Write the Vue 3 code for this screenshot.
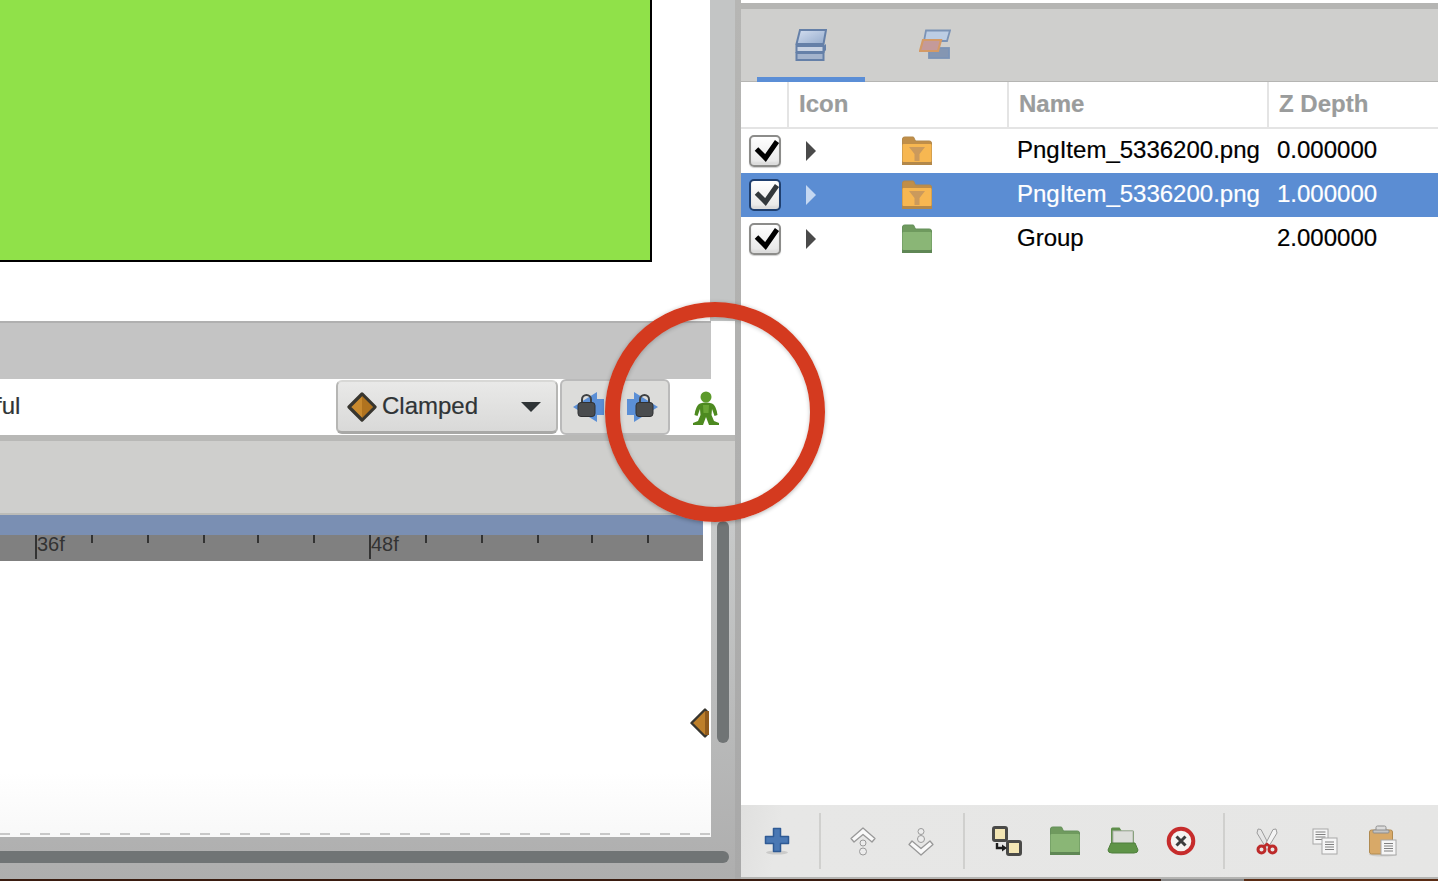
<script setup>
const rows = [
  { name: 'PngItem_5336200.png', depth: '0.000000', kind: 'filter', selected: false },
  { name: 'PngItem_5336200.png', depth: '1.000000', kind: 'filter', selected: true },
  { name: 'Group', depth: '2.000000', kind: 'group', selected: false },
]
const minorTicks = [91, 147, 203, 257, 313, 425, 481, 537, 591, 647]
const majorTicks = [
  { x: 35, label: '36f' },
  { x: 369, label: '48f' },
]
</script>

<template>
  <div class="app">
    <div class="main">
      <div class="left">
        <div class="canvas-row">
          <div class="canvas"><div class="green"></div></div>
          <div class="gutter-top"></div>
        </div>
        <div class="band-row">
          <div class="band"></div>
        </div>
        <div class="ctrl-row">
          <div class="ctrl-text">ful</div>
          <div class="clamped">
            <svg width="30" height="30" viewBox="0 0 30 30" class="soft">
              <polygon points="15,2 28,15 15,28 2,15" fill="#c98a2e" stroke="#38362f" stroke-width="3.200" stroke-linejoin="round" />
              <polygon points="15,4 26,15 15,26" fill="#b0731f" />
            </svg>
            <span class="clamped-label">Clamped</span>
            <svg width="20" height="10" viewBox="0 0 20 10" class="caret"><polygon points="0,0 20,0 10,10" fill="#2f3436" /></svg>
          </div>
          <div class="lock-group">
            <svg width="32" height="32" viewBox="0 0 32 32" class="soft">
              <polygon points="32,8 25,8 25,1 1,16 25,31 25,24 32,24" fill="#5b8fd6" />
              <path d="M10 12V8.500a4.500 4.500 0 0 1 9 0V12" fill="none" stroke="#3e4042" stroke-width="2" />
              <rect x="6" y="11.500" width="17" height="14" rx="3" fill="#4a4c4e" stroke="#2f3032" />
            </svg>
            <svg width="32" height="32" viewBox="0 0 32 32" class="soft">
              <polygon points="0,8 7,8 7,1 31,16 7,31 7,24 0,24" fill="#5b8fd6" />
              <path d="M13 12V8.500a4.500 4.500 0 0 1 9 0V12" fill="none" stroke="#3e4042" stroke-width="2" />
              <rect x="9" y="11.500" width="17" height="14" rx="3" fill="#4a4c4e" stroke="#2f3032" />
            </svg>
          </div>
          <div class="person">
            <svg width="28" height="34" viewBox="0 0 28 34" class="soft">
              <circle cx="14" cy="6" r="5.500" fill="#5c9a2a" />
              <path d="M8 12.500Q14 10.500 20 12.500Q24 14 25.500 24L22.500 25L20 18L19.500 24L22 30L27 32V34H17L14 26L11 34H1V32L6 30L8.500 24L8 18L5.500 25L2.500 24Q4 14 8 12.500Z" fill="#4d8a20" />
              <path d="M11 14H17L16.500 22H11.500Z" fill="#6aa636" />
            </svg>
          </div>
        </div>
        <div class="sep"></div>
        <div class="timeline-head"></div>
        <div class="lower">
          <div class="lower-main">
            <div class="tracks">
              <div class="blue-strip"></div>
              <div class="ruler">
                <i v-for="t in minorTicks" :key="t" class="tick" :style="{ left: t + 'px' }"></i>
                <template v-for="m in majorTicks" :key="m.x">
                  <i class="tick major" :style="{ left: m.x + 'px' }"></i>
                  <span class="tick-label" :style="{ left: m.x + 2 + 'px' }">{{ m.label }}</span>
                </template>
              </div>
              <svg class="keyframe" width="19" height="30" viewBox="0 0 19 30">
                <polygon points="15,1.500 28,15 15,28.500 1.500,15" fill="#bd7f2a" stroke="#37352f" stroke-width="2.400" stroke-linejoin="round" />
                <rect x="15" y="3" width="4" height="24" fill="#8f5a1c" />
              </svg>
              <div class="dashes"></div>
            </div>
            <div class="v-gutter"><div class="v-thumb"></div></div>
          </div>
          <div class="h-gutter"><div class="h-thumb"></div></div>
        </div>
      </div>

      <div class="divider"></div>

      <div class="right">
        <div class="top-white"></div>
        <div class="top-line"></div>
        <div class="tabs">
          <div class="tab active">
            <svg width="32" height="34" viewBox="0 0 32 34" class="soft">
              <defs>
                <linearGradient id="plate" x1="0" y1="0" x2="1" y2="1">
                  <stop offset="0" stop-color="#d4dff0" /><stop offset="1" stop-color="#94abcc" />
                </linearGradient>
              </defs>
              <rect x="1.500" y="25" width="27" height="7" fill="#a3b3cc" stroke="#6580a8" stroke-width="2" />
              <rect x="1.500" y="18" width="27" height="6" fill="#c8d2e2" stroke="#6580a8" stroke-width="2" />
              <polygon points="28.500,25 31,22 31,16 28.500,18" fill="#6580a8" />
              <polygon points="5,2 31,2 28.500,16 1.500,16" fill="url(#plate)" stroke="#6580a8" stroke-width="2" />
            </svg>
          </div>
          <div class="tab">
            <svg width="32" height="32" viewBox="0 0 32 32" class="soft">
              <polygon points="7,1.500 31,1.500 28,12 5,12" fill="#bccde4" stroke="#7b93b6" stroke-width="1.800" />
              <rect x="10" y="19" width="20" height="10" fill="#8496b2" stroke="#7b93b6" stroke-width="1.800" />
              <polygon points="4,11 22,11 19,22 1,22" fill="#c49a9a" stroke="#d49a66" stroke-width="2.200" />
            </svg>
          </div>
        </div>

        <div class="table">
          <div class="thead">
            <div class="th first"></div>
            <div class="th">Icon</div>
            <div class="th">Name</div>
            <div class="th">Z Depth</div>
          </div>
          <div v-for="(r, i) in rows" :key="i" class="tr" :class="{ selected: r.selected }">
            <div class="td check-cell">
              <span class="checkbox">
                <svg class="tick-mark" width="24" height="22" viewBox="0 0 24 22"><path d="M3.500 9L12.500 18L24 1.500" fill="none" stroke="currentColor" stroke-width="5" /></svg>
              </span>
            </div>
            <div class="td icon-cell">
              <span class="arrow"></span>
              <svg v-if="r.kind === 'filter'" width="32" height="30" viewBox="0 0 32 30" class="soft">
                <path d="M1.500 3a2 2 0 0 1 2-2h9l2 4h14a2 2 0 0 1 2 2v19a2 2 0 0 1-2 2h-25a2 2 0 0 1-2-2z" fill="#c08e48" stroke="#b3884a" />
                <rect x="1.500" y="8" width="29" height="18" rx="1" fill="#f7b751" />
                <polygon points="8,11 24,11 18.500,18 18.500,25 13.500,25 13.500,18" fill="#cb9a5c" />
                <rect x="1" y="26" width="30" height="3" fill="#b3884a" />
              </svg>
              <svg v-else width="32" height="30" viewBox="0 0 32 30" class="soft">
                <path d="M1.500 3a2 2 0 0 1 2-2h9l2 4h14a2 2 0 0 1 2 2v19a2 2 0 0 1-2 2h-25a2 2 0 0 1-2-2z" fill="#6f9a5e" stroke="#65905a" />
                <rect x="1.500" y="8" width="29" height="18" rx="1" fill="#8ab676" />
                <rect x="1" y="26" width="30" height="3" fill="#5f8755" />
              </svg>
            </div>
            <div class="td text-cell">{{ r.name }}</div>
            <div class="td text-cell">{{ r.depth }}</div>
          </div>
        </div>

        <div class="toolbar">
          <div class="tb-btn wide">
            <svg width="26" height="28" viewBox="0 0 26 28" class="soft">
              <ellipse cx="13" cy="25.500" rx="11" ry="2" fill="#000" opacity=".12" />
              <path d="M9.500 1.500h7v8h8v7h-8v8h-7v-8h-8v-7h8z" fill="#4a78b4" stroke="#2f5a94" stroke-width="1.500" stroke-linejoin="round" />
            </svg>
          </div>
          <div class="tb-sep"></div>
          <div class="tb-btn">
            <svg width="26" height="29" viewBox="0 0 26 29" class="soft">
              <path d="M13 1L25 11.500L22 15L13 7.500L4 15L1 11.500Z" fill="#f9f9f9" stroke="#999" stroke-width="1.300" stroke-linejoin="round" />
              <circle cx="13" cy="16" r="3" fill="#ececec" stroke="#999" />
              <circle cx="13" cy="24.500" r="3.500" fill="#ececec" stroke="#999" />
            </svg>
          </div>
          <div class="tb-btn">
            <svg width="26" height="29" viewBox="0 0 26 29" class="soft">
              <circle cx="13" cy="4.500" r="3" fill="#ececec" stroke="#999" />
              <circle cx="13" cy="12" r="3.500" fill="#ececec" stroke="#999" />
              <path d="M13 28L25 17.500L22 14L13 21.500L4 14L1 17.500Z" fill="#f9f9f9" stroke="#999" stroke-width="1.300" stroke-linejoin="round" />
            </svg>
          </div>
          <div class="tb-sep"></div>
          <div class="tb-btn">
            <svg width="30" height="30" viewBox="0 0 30 30" class="soft">
              <rect x="1.500" y="1.500" width="13" height="13" rx="1.500" fill="#f3e6b4" stroke="#4a4a48" stroke-width="3" />
              <rect x="15.500" y="15.500" width="13" height="13" rx="1.500" fill="#f3e6b4" stroke="#4a4a48" stroke-width="3" />
              <path d="M5 17V22H11" fill="none" stroke="#1c1c1c" stroke-width="2.400" />
              <polygon points="10,18.500 15,22 10,25.500" fill="#1c1c1c" />
            </svg>
          </div>
          <div class="tb-btn">
            <svg width="32" height="30" viewBox="0 0 32 30" class="soft">
              <path d="M1.500 3a2 2 0 0 1 2-2h9l2 4h14a2 2 0 0 1 2 2v19a2 2 0 0 1-2 2h-25a2 2 0 0 1-2-2z" fill="#6f9a5e" stroke="#65905a" />
              <rect x="1.500" y="8" width="29" height="18" rx="1" fill="#8ab676" />
              <rect x="1" y="26" width="30" height="3" fill="#5f8755" />
            </svg>
          </div>
          <div class="tb-btn">
            <svg width="32" height="28" viewBox="0 0 32 28" class="soft">
              <path d="M4 2a1.500 1.500 0 0 1 1.500-1.500h7l2 3h11a1.500 1.500 0 0 1 1.500 1.500v12H4z" fill="#5f8f4c" />
              <rect x="6" y="4" width="20" height="13" fill="#dcdeda" stroke="#b0b4ac" />
              <path d="M4 16H28L31 23Q31 26 27 26H5Q1 26 1 23Z" fill="#5f9448" stroke="#4f7f3c" />
            </svg>
          </div>
          <div class="tb-btn">
            <svg width="30" height="30" viewBox="0 0 30 30" class="soft">
              <circle cx="15" cy="15" r="12.300" fill="#f4f2f0" stroke="#c62c2c" stroke-width="4" />
              <path d="M10.500 10.500L19.500 19.500M19.500 10.500L10.500 19.500" stroke="#3c3c3c" stroke-width="3" />
            </svg>
          </div>
          <div class="tb-sep"></div>
          <div class="tb-btn">
            <svg width="22" height="27" viewBox="0 0 22 27" class="soft">
              <path d="M2 1L5 1.500L12.500 16L9.500 19L1 5Z" fill="#e6e6e6" stroke="#9c9c9c" />
              <path d="M20 1L17 1.500L9.500 16L12.500 19L21 5Z" fill="#f4f4f4" stroke="#9c9c9c" />
              <circle cx="5.500" cy="21.500" r="3.500" fill="none" stroke="#bd2a2a" stroke-width="3" />
              <circle cx="16.500" cy="21.500" r="3.500" fill="none" stroke="#bd2a2a" stroke-width="3" />
              <path d="M8 18.500L11 16L14 18.500" fill="none" stroke="#bd2a2a" stroke-width="2.400" />
            </svg>
          </div>
          <div class="tb-btn">
            <svg width="26" height="27" viewBox="0 0 26 27" class="soft">
              <rect x="1" y="1" width="15" height="15" fill="#f6f6f6" stroke="#a8a8a8" />
              <path d="M3.500 4H13.500M3.500 6.500H13.500M3.500 9H13.500M3.500 11.500H13.500" stroke="#808080" />
              <rect x="10" y="10" width="15" height="16" fill="#f6f6f6" stroke="#a8a8a8" />
              <path d="M13 14H22M13 16.500H22M13 19H22M13 21.500H22" stroke="#808080" />
            </svg>
          </div>
          <div class="tb-btn">
            <svg width="30" height="32" viewBox="0 0 30 32" class="soft">
              <ellipse cx="15" cy="29.500" rx="14" ry="2" fill="#000" opacity=".1" />
              <rect x="1.500" y="5" width="23" height="24" rx="2" fill="#d8a968" stroke="#b08a50" />
              <rect x="8" y="1" width="10" height="5" rx="1.500" fill="#dcdcdc" stroke="#8e8e8e" />
              <rect x="5" y="5" width="16" height="3" rx="1" fill="#c4c4c4" stroke="#8e8e8e" />
              <rect x="13" y="15" width="15" height="15" fill="#f6f6f6" stroke="#a8a8a8" />
              <path d="M16 18.500H25M16 21H25M16 23.500H25M16 26H25" stroke="#808080" />
            </svg>
          </div>
        </div>
      </div>
    </div>

    <div class="footer">
      <div class="footer-dark"></div>
      <div class="footer-grey"></div>
      <div class="footer-dark tail"></div>
    </div>

    <div class="ring"></div>
  </div>
</template>

<style>
html, body {
  margin: 0;
  background: #fff;
  overflow: hidden;
}
</style>

<style scoped>
.app {
  position: relative;
  width: 1438px;
  height: 881px;
  overflow: hidden;
  display: flex;
  flex-direction: column;
  font-family: "Liberation Sans", Arial, sans-serif;
  font-size: 24px;
  color: #000;
  background: #fff;
  -webkit-text-stroke: 0.2px currentColor;
}
.soft { filter: blur(0.6px); flex: none; display: block; }

.main { display: flex; height: 879px; flex: none; }

/* left column */
.left { width: 735px; display: flex; flex-direction: column; flex: none; }
.canvas-row { display: flex; height: 321px; flex: none; }
.canvas { width: 710px; background: #fff; flex: none; }
.green {
  width: 650px;
  height: 260px;
  background: #90e149;
  border-right: 2px solid #000;
  border-bottom: 2px solid #000;
}
.gutter-top { flex: 1; background: #c3c5c5; }
.band-row { height: 58px; flex: none; background: #fff; }
.band {
  width: 711px;
  height: 58px;
  box-sizing: border-box;
  background: #c4c4c4;
  border-top: 2px solid #b0b0b0;
}
.ctrl-row { height: 56px; flex: none; display: flex; align-items: center; background: #fff; }
.ctrl-text { flex: 1; color: #2f3436; margin-left: -5px; padding-bottom: 2px; }
.clamped {
  width: 222px;
  height: 54px;
  box-sizing: border-box;
  display: flex;
  align-items: center;
  padding: 0 15px 0 9px;
  border: 2px solid #b6b6b4;
  border-top-color: #d8d8d6;
  border-bottom: 3px solid #a8a8a6;
  border-radius: 6px;
  background: linear-gradient(#e9e9e8, #d9d9d8);
  color: #2f3436;
}
.clamped-label { margin-left: 5px; flex: 1; padding-bottom: 2px; }
.caret { flex: none; }
.lock-group {
  width: 110px;
  height: 56px;
  margin-left: 2px;
  box-sizing: border-box;
  display: flex;
  align-items: center;
  justify-content: space-between;
  padding: 0 9px 0 10px;
  background: #dcdcda;
  border: 2px solid #bababa;
  border-radius: 6px;
}
.person { width: 65px; flex: none; display: flex; justify-content: center; padding-left: 7px; box-sizing: border-box; margin-top: 1px; }
.sep { height: 6px; flex: none; background: #b8b8b6; }
.timeline-head {
  height: 74px;
  flex: none;
  box-sizing: border-box;
  background: #cfcfcd;
  border-bottom: 2px solid #bcbcb8;
}
.lower {
  flex: 1;
  display: flex;
  flex-direction: column;
  background: linear-gradient(#c8caca, #aeaeae);
}
.lower-main { display: flex; height: 322px; flex: none; }
.tracks {
  width: 711px;
  flex: none;
  position: relative;
  background: linear-gradient(#fff 0, #fff 80%, #f8f8f8 100%);
}
.blue-strip { width: 703px; height: 20px; background: #7a8fb3; }
.ruler { position: relative; width: 703px; height: 26px; background: #808080; }
.tick { position: absolute; top: 0; width: 2px; height: 8px; background: #333; }
.tick.major { height: 24px; }
.tick-label {
  position: absolute;
  top: -2px;
  font-size: 20px;
  line-height: 22px;
  color: #333;
  -webkit-text-stroke: 0;
}
.keyframe { position: absolute; left: 690px; top: 193px; }
.dashes {
  position: absolute;
  left: 0;
  right: 1px;
  bottom: 2px;
  height: 2px;
  background: repeating-linear-gradient(90deg, #c8c8c8 0 10px, transparent 10px 20px);
}
.v-gutter { flex: 1; padding: 6px 0 0 6px; }
.v-thumb { width: 12px; height: 222px; border-radius: 6px; background: #707475; }
.h-gutter { padding-top: 14px; }
.h-thumb { width: 729px; height: 12px; border-radius: 0 6px 6px 0; background: #707475; }

.divider { width: 6px; flex: none; background: linear-gradient(#b6b6b4, #a9a9a9); }

/* right column */
.right { flex: 1; display: flex; flex-direction: column; min-width: 0; }
.top-white { height: 3px; flex: none; background: #fff; }
.top-line { height: 6px; flex: none; background: #b5b5b3; }
.tabs {
  height: 73px;
  flex: none;
  box-sizing: border-box;
  display: flex;
  gap: 16px;
  padding-left: 16px;
  background: #cfcfcd;
  box-shadow: inset 0 -1px 0 #b5b5b3;
}
.tab {
  width: 108px;
  box-sizing: border-box;
  display: flex;
  align-items: center;
  justify-content: center;
  padding-top: 4px;
  border-bottom: 5px solid transparent;
}
.tab.active { border-bottom-color: #5b8ed6; }

.table { flex: 1; background: #fff; }
.thead, .tr { display: grid; grid-template-columns: 46px 220px 260px 1fr; }
.thead { height: 47px; box-sizing: border-box; border-bottom: 2px solid #e4e4e4; }
.th {
  display: flex;
  align-items: center;
  padding: 0 0 2px 10px;
  border-left: 2px solid #e4e4e4;
  font-weight: 700;
  color: #9a9c9c;
}
.th.first { border-left: 0; padding: 0; }
.tr { height: 44px; }
.tr.selected { background: #5b8dd3; color: #fff; }
.td { display: flex; align-items: center; min-width: 0; }
.check-cell { padding-left: 8px; }
.checkbox {
  width: 32px;
  height: 32px;
  box-sizing: border-box;
  display: flex;
  align-items: center;
  justify-content: center;
  border: 2px solid #8c8c8a;
  border-radius: 5px;
  background: linear-gradient(#ffffff, #e6e6e6);
  box-shadow: inset 0 -3px 2px #dcdcdc, 0 1px 1px #cfcfcf;
  color: #000;
}
.tick-mark { overflow: visible; display: block; filter: blur(0.3px); }
.selected .checkbox { border-color: #1f3f6f; color: #33383c; box-shadow: inset 0 -3px 2px #dcdcdc; }
.icon-cell { padding-left: 19px; gap: 85px; }
.arrow {
  width: 0;
  height: 0;
  flex: none;
  border-left: 10px solid #4a4a4a;
  border-top: 10.500px solid transparent;
  border-bottom: 10.500px solid transparent;
}
.selected .arrow { border-left-color: #c5d8f2; }
.text-cell { padding: 0 0 2px 10px; white-space: nowrap; box-sizing: border-box; }

.toolbar {
  height: 74px;
  flex: none;
  box-sizing: border-box;
  display: flex;
  align-items: center;
  padding-left: 6px;
  background: linear-gradient(100deg, #e0e0df, #e7e7e6 6%, #e6e6e5);
  border-bottom: 2px solid #b4b4b2;
}
.tb-btn { width: 58px; flex: none; display: flex; justify-content: center; }
.tb-btn.wide { width: 59px; }
.tb-sep { width: 2px; height: 56px; flex: none; margin: 0 13px; background: #d0d0ce; }

.footer { height: 2px; flex: none; display: flex; }
.footer-dark { width: 1161px; background: #3a1c10; flex: none; }
.footer-grey { width: 83px; background: #8a8a8a; flex: none; }
.footer-dark.tail { flex: 1; width: auto; background: #5a2c14; }

.ring {
  position: absolute;
  left: 605px;
  top: 302px;
  width: 220px;
  height: 220px;
  box-sizing: border-box;
  border: 15px solid #d43a1f;
  border-radius: 50%;
  box-shadow: 0 1px 4px rgba(0, 0, 0, 0.3), inset 0 1px 4px rgba(0, 0, 0, 0.22);
}
</style>
